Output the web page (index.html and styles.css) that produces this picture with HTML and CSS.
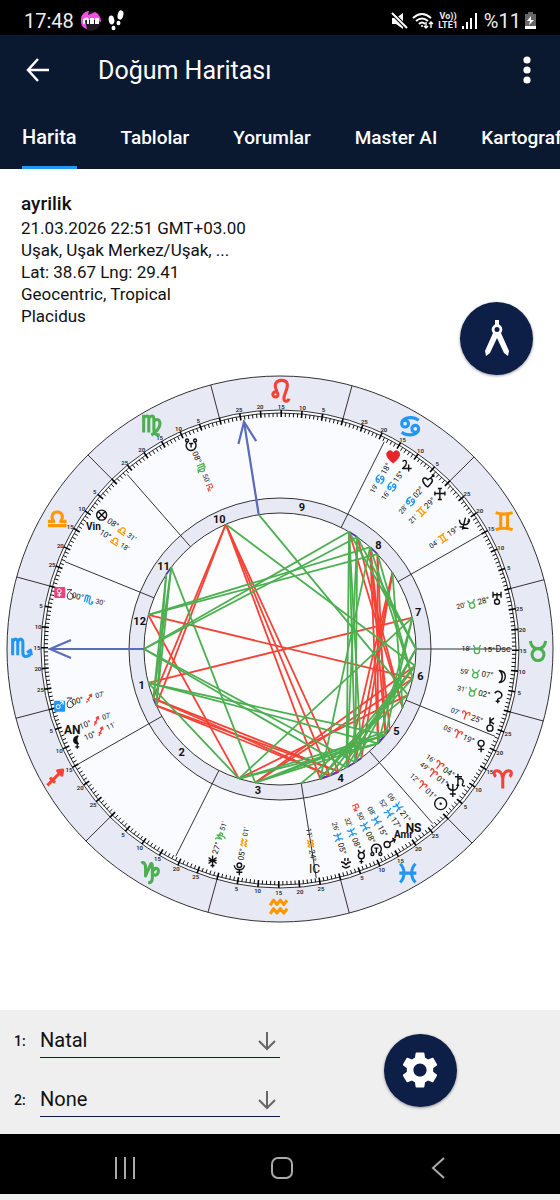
FILE: index.html
```html
<!DOCTYPE html>
<html lang="tr">
<head>
    <meta charset="UTF-8">
    <meta name="viewport" content="width=device-width, initial-scale=1.0">
    <title>Doğum Haritası</title>
    <link rel="stylesheet" href="styles.css">
</head>
<body>
    <div class="status-bar">
        <span>17:48</span>
        <svg class="app-badge" width="20" height="20" viewBox="0 0 20 20">
            <circle cx="10" cy="10" r="10" fill="#1d1a20"/>
            <path d="M0 11C-1 4 4 0 8 0L7 4L12 2L14 1C18 3 20 7 20 11L15 9H4L6 18C2 17 0 14 0 11Z" fill="#f04fe0"/>
            <path d="M3 13V8M3 9Q6 6 7 9V13M10 13V8H12V13M15 13V8H17V13" fill="none" stroke="#fff" stroke-width="2"/>
        </svg>
        <svg width="17" height="21" viewBox="0 0 17 21" fill="#fff">
            <ellipse cx="3.500" cy="10" rx="2.800" ry="4.500" transform="rotate(-10 3.500 10)"/>
            <ellipse cx="5.500" cy="18" rx="2" ry="2.300"/>
            <ellipse cx="12.500" cy="5" rx="2.800" ry="4.700" transform="rotate(14 12.500 5)"/>
            <ellipse cx="10.500" cy="13" rx="2" ry="2.300"/>
        </svg>
        <div class="status-right">
            <svg width="17" height="18" viewBox="0 0 17 18" fill="#fff">
                <path d="M1 6H5L12 1V17L5 12H1Z"/>
                <path d="M1 1L16 16" stroke="#000" stroke-width="4"/>
                <path d="M1 1L16 16" stroke="#fff" stroke-width="2"/>
            </svg>
            <svg width="22" height="18" viewBox="0 0 22 18" fill="none" stroke="#fff" stroke-width="2">
                <path d="M1 6Q10-2 19 6M4 9Q10 4 16 9M7 12Q10 9 13 12"/>
                <circle cx="10" cy="14" r="1" fill="#fff" stroke="none"/>
                <path d="M14 10V16M12 14L14 16L16 14M19 16V10M17 12L19 10L21 12" stroke-width="1.400"/>
            </svg>
            <span class="volte"><span>Vo))</span><span>LTE1</span></span>
            <svg width="15" height="16" viewBox="0 0 15 16" stroke="#fff" stroke-width="2">
                <path d="M1 16V13M5 16V9M9 16V5M14 16V0"/>
            </svg>
            <span class="percent">%11</span>
            <svg width="11" height="17" viewBox="0 0 11 17">
                <path d="M3 0H8V2H11V17H0V2H3Z" fill="#666"/>
                <path d="M0 14H11V17H0Z" fill="#fff"/>
                <path d="M6 4L2 9H5L4 13L9 8H6Z" fill="#fff"/>
            </svg>
        </div>
    </div>

    <header class="app-bar">
        <div class="title-row">
            <button type="button" class="icon-button" aria-label="Geri">
                <svg width="24" height="24" viewBox="0 0 24 24" fill="none" stroke="#fff" stroke-width="2.500">
                    <path d="M23 12H2M12 1L2 12L12 23"/>
                </svg>
            </button>
            <h1>Doğum Haritası</h1>
            <button type="button" class="icon-button" aria-label="Menü">
                <svg width="8" height="28" viewBox="0 0 8 28" fill="#fff">
                    <circle cx="4" cy="4" r="3.600"/>
                    <circle cx="4" cy="14" r="3.600"/>
                    <circle cx="4" cy="24" r="3.600"/>
                </svg>
            </button>
        </div>
        <nav class="tabs">
            <button type="button" class="tab active">Harita</button>
            <button type="button" class="tab">Tablolar</button>
            <button type="button" class="tab">Yorumlar</button>
            <button type="button" class="tab">Master AI</button>
            <button type="button" class="tab">Kartograf</button>
        </nav>
    </header>

    <main class="content">
        <section class="info">
            <h2>ayrilik</h2>
            <p>21.03.2026 22:51 GMT+03.00</p>
            <p>Uşak, Uşak Merkez/Uşak, ...</p>
            <p>Lat: 38.67 Lng: 29.41</p>
            <p>Geocentric, Tropical</p>
            <p>Placidus</p>
        </section>
        <button type="button" class="fab fab-compass" aria-label="Pergel">
            <svg width="28" height="40" viewBox="0 0 28 40" fill="#fff">
                <path d="M12 1H16V6H12Z"/>
                <path fill-rule="evenodd" d="M14 5A5.500 5.500 0 0 1 18 14L26 32L25 37L21 34L14 19L7 34L3 37L2 32L10 14A5.500 5.500 0 0 1 14 5ZM14 8A2.500 2.500 0 1 0 14 13A2.500 2.500 0 1 0 14 8Z"/>
            </svg>
        </button>
        <svg id="chart" class="chart" viewBox="-280 -280 560 560"></svg>
    </main>

    <section class="panel">
        <div class="fields">
            <div class="field">
                <label for="chart-one">1:</label>
                <div class="select-box">
                    <select id="chart-one"><option>Natal</option><option>None</option></select>
                    <svg width="18" height="20" viewBox="0 0 18 20" fill="none" stroke="#666" stroke-width="2"><path d="M9 1V18M1 10L9 18L17 10"/></svg>
                </div>
            </div>
            <div class="field">
                <label for="chart-two">2:</label>
                <div class="select-box">
                    <select id="chart-two"><option>None</option><option>Natal</option></select>
                    <svg width="18" height="20" viewBox="0 0 18 20" fill="none" stroke="#666" stroke-width="2"><path d="M9 1V18M1 10L9 18L17 10"/></svg>
                </div>
            </div>
        </div>
        <div class="panel-action">
            <button type="button" class="fab" aria-label="Ayarlar">
                <svg width="44" height="46" viewBox="0 0 24 24" fill="#fff">
                    <path d="M19.140 12.940c.040-.300.060-.610.060-.940 0-.320-.020-.640-.070-.940l2.030-1.580c.180-.140.230-.410.120-.610l-1.920-3.320c-.120-.220-.370-.290-.590-.220l-2.390.960c-.500-.380-1.030-.700-1.620-.940l-.360-2.540c-.040-.240-.240-.410-.480-.410h-3.840c-.240 0-.430.170-.470.410l-.360 2.540c-.590.240-1.130.570-1.620.940l-2.390-.960c-.220-.080-.470 0-.590.220L2.740 8.870c-.120.210-.080.470.120.610l2.030 1.580c-.050.300-.090.630-.090.940s.020.640.070.940l-2.030 1.580c-.180.140-.230.410-.120.610l1.920 3.320c.120.220.370.290.590.220l2.390-.960c.500.380 1.030.700 1.620.940l.360 2.540c.050.240.240.410.480.410h3.840c.240 0 .440-.170.470-.410l.360-2.540c.590-.240 1.130-.560 1.620-.940l2.390.960c.220.080.470 0 .590-.220l1.920-3.320c.120-.220.070-.470-.120-.610l-2.010-1.580zM12 15.600c-1.980 0-3.600-1.620-3.600-3.600s1.620-3.600 3.600-3.600 3.600 1.620 3.600 3.600-1.620 3.600-3.600 3.600z"/>
                </svg>
            </button>
        </div>
    </section>

    <nav class="system-nav">
        <button type="button" aria-label="Son uygulamalar">
            <svg width="22" height="22" viewBox="0 0 22 22" stroke="#aaa" stroke-width="2"><path d="M2 0V22M11 0V22M20 0V22"/></svg>
        </button>
        <button type="button" aria-label="Ana ekran">
            <svg width="22" height="22" viewBox="0 0 22 22" fill="none" stroke="#aaa" stroke-width="2"><rect x="1" y="1" width="20" height="20" rx="6"/></svg>
        </button>
        <button type="button" aria-label="Geri">
            <svg width="22" height="22" viewBox="0 0 22 22" fill="none" stroke="#aaa" stroke-width="2"><path d="M16 1L5 11L16 21"/></svg>
        </button>
    </nav>
    <script src="chart.js"></script>
</body>
</html>
```
FILE: styles.css
```css
* {
    box-sizing: border-box;
}
body {
    font-family: Roboto, "Noto Sans", sans-serif;
    background-color: #efefef;
    color: #111111;
    margin: 0;
    padding-bottom: 6px;
    display: flex;
    flex-direction: column;
    min-height: 100vh;
}
button {
    background: none;
    border: none;
    padding: 0;
    font-family: inherit;
    cursor: pointer;
}
svg {
    display: block;
    flex: none;
}
h1, h2, p {
    margin: 0;
}
.status-bar {
    background-color: #000000;
    color: #eeeeee;
    height: 35px;
    padding: 6px 24px 0;
    display: flex;
    align-items: center;
    gap: 7px;
    font-size: 20px;
}
.status-right {
    margin-left: auto;
    display: flex;
    align-items: center;
    gap: 4px;
}
.volte {
    display: flex;
    flex-direction: column;
    align-items: center;
    font-size: 9px;
    line-height: 9px;
    font-weight: 700;
}
.percent {
    margin-left: 3px;
}
.app-bar {
    background-color: #0a1830;
    color: #ffffff;
}
.title-row {
    height: 70px;
    padding: 0 29px 0 26px;
    display: flex;
    align-items: center;
}
.title-row h1 {
    flex: 1;
    margin-left: 48px;
    font-size: 25px;
    font-weight: 400;
}
.tabs {
    display: flex;
    gap: 44px;
    height: 64px;
    padding-left: 22px;
    overflow: hidden;
}
.tab {
    flex: none;
    color: #ffffff;
    font-size: 19px;
    font-weight: 500;
    border-top: 3px solid transparent;
    border-bottom: 3px solid transparent;
}
.tab.active {
    font-size: 20px;
    border-bottom-color: #2196f3;
}
.content {
    position: relative;
    flex: 1;
    background-color: #ffffff;
    padding-top: 24px;
}
.info {
    padding: 0 21px;
    margin-bottom: 42px;
    font-size: 17px;
    line-height: 22px;
}
.info h2 {
    font-size: 19px;
    font-weight: 500;
    margin-bottom: 2px;
}
.fab {
    width: 73px;
    height: 73px;
    border-radius: 50%;
    background-color: #0d1f47;
    box-shadow: 0 1px 3px rgba(0, 0, 0, 0.4);
    display: flex;
    align-items: center;
    justify-content: center;
}
.fab-compass {
    position: absolute;
    top: 133px;
    right: 27px;
}
.chart {
    width: 100%;
    max-width: 640px;
    margin: 0 auto;
}
.chart text {
    text-anchor: middle;
    dominant-baseline: central;
    fill: #111111;
}
.chart .scale {
    font-size: 6px;
    font-weight: 500;
}
.chart .house {
    font-size: 11px;
    font-weight: 700;
}
.chart .degree {
    font-size: 8px;
}
.chart .minute {
    font-size: 7px;
}
.chart .point {
    font-size: 12px;
    font-weight: 700;
}
.chart .point-small {
    font-size: 10px;
    font-weight: 700;
}
.chart .point-light {
    font-size: 12px;
}
.chart .point-narrow {
    font-size: 9px;
}
.panel {
    background-color: #efefef;
    display: flex;
    padding: 13px 0 17px;
}
.fields {
    width: 50%;
    display: flex;
    flex-direction: column;
    gap: 24px;
    padding-left: 14px;
}
.field {
    display: flex;
    align-items: center;
}
.field label {
    width: 26px;
    font-size: 14px;
    font-weight: 500;
}
.select-box {
    position: relative;
    flex: 1;
}
.select-box svg {
    position: absolute;
    top: 8px;
    right: 4px;
    pointer-events: none;
}
select {
    display: block;
    width: 100%;
    height: 35px;
    padding: 0;
    appearance: none;
    background: none;
    border: none;
    border-bottom: 1px solid #0d1f47;
    border-radius: 0;
    color: #111111;
    font-family: inherit;
    font-size: 20px;
}
.panel-action {
    width: 50%;
    display: flex;
    align-items: center;
    justify-content: center;
}
.system-nav {
    height: 60px;
    background-color: #000000;
    padding: 8px 42px 0 46px;
    display: flex;
    justify-content: space-around;
    align-items: center;
}
```
FILE: chart.js
```js
const ASC = 225.3;
const OUTER = 273;
const SCALE_OUT = 239;
const SCALE_MID = 236;
const SCALE_IN = 232;
const HOUSE_OUT = 151;
const HOUSE_IN = 136;

const RED = '#f44336';
const GREEN = '#4caf50';
const ORANGE = '#ff9800';
const BLUE = '#2196f3';

const circlePath = (x, y, r) => `M${x - r} ${y}a${r} ${r} 0 1 0 ${2 * r} 0a${r} ${r} 0 1 0 ${-2 * r} 0`;

// drawn in a box from -12 to 12
const signs = [
    { color: RED, d: 'M0 11V-1C-1-8-4-10-7-10C-11-10-11-5-8-3M0-1C1-8 4-10 7-10C11-10 11-5 8-3' },
    { color: GREEN, d: 'M-9-11C-8-4-5-2 0-2C5-2 8-4 9-11' + circlePath(0, 5, 7) },
    { color: ORANGE, d: 'M-10-10C-4-8 4-8 10-10M-10 10C-4 8 4 8 10 10M-4-8V8M4-8V8' },
    { color: BLUE, d: 'M-10-5C-6-12 5-11 10-7M10 5C6 12-5 11-10 7' + circlePath(-6, -3, 4) + circlePath(6, 3, 4) },
    { color: RED, d: 'M-5 1C-6-2-8-4-7-8C-5-14 6-14 7-8C8-2 3 3 3 9C3 13 8 13 9 9' + circlePath(-7, 4, 3) },
    { color: GREEN, d: 'M-10-12V9M-10-8C-7-12-4-11-4-7V9M-4-8C-1-12 2-11 2-7V6C2 10 5 12 9 12M2-4C6-9 10-5 9 0C8 5 4 9-1 12' },
    { color: ORANGE, d: 'M-11 8H11M-11 3H-4C-8-2-6-8 0-8C6-8 8-2 4 3H11' },
    { color: BLUE, d: 'M-11-11V9M-11-7C-8-12-5-10-5-6V9M-5-7C-2-12 1-10 1-6V6C1 11 5 12 10 8M6 6L10 3L11 9' },
    { color: RED, d: 'M-10 10L7-7M2-7L8-8L7-2ZM-7 1L-1 7' },
    { color: GREEN, d: 'M-10-10C-7-12-5-9-5-5V5L1-9C3-11 3-7 3-3V7C3 11 1 13-2 13M3 1C5-6 11-5 10 0C9 5 5 5 3 2' },
    { color: ORANGE, d: 'M-10-2L-6-8L-2-3L2-8L6-3L10-8M-10 8L-6 2L-2 7L2 2L6 7L10 2' },
    { color: BLUE, d: 'M-9-11C-3-5-3 5-9 11M9-11C3-5 3 5 9 11M-10 0H10' }
];

const glyphs = {
    jupiter: 'M-4-4C-1-7 1-3-1 0L-4 3H5M2-1V6',
    eros: 'M0 5C-6 1-6-4-3-4C-1-4 0-2 0-2C0-2 2-5 4-3C6-1 3 2 0 5M3-4L6-7M4-7H6V-5',
    cross: 'M-5 0H5M0-5V6M-5-2V2M5-2V2M-2-5H2M-2 6H2',
    psyche: 'M-5-4C-5 2 3 3 5-3M1-6L-2 6M-5 3L4 5M4-5L5-3L3-2',
    uranus: 'M-4-6V0M4-6V0M-4-3H4M0-5V2' + circlePath(0, 4, 2.5),
    moon: 'M-2-6C6-5 6 5-2 6C2 3 2-3-2-6Z',
    ceres: 'M-3-4C0-8 5-5 4-1C3 2 0 1 0 2V6M-2 4H2',
    chiron: 'M0 1V-7M0-3L4-6M0-3L4 0' + circlePath(0, 4, 3),
    venus: 'M0 1V7M-3 4H3' + circlePath(0, -2, 3),
    saturn: 'M-2-7V3M-5-4H2M-2-1C1-4 4-1 3 2C2 4 2 6 5 5',
    neptune: 'M-5-5C-5 2 5 2 5-5M0-6V7M-3 4H3M-6-4L-5-6L-4-4M4-4L5-6L6-4',
    sun: circlePath(0, 0, 6) + circlePath(0, 0, 0.5),
    mars: 'M1-1L6-4M3-5L6-4L5-1' + circlePath(-2, 1, 3),
    node: 'M-3 3C-7-1-4-6 0-6C4-6 7-1 3 3M-2-2H2M0-2V3' + circlePath(-4, 4, 1.5) + circlePath(4, 4, 1.5),
    southNode: 'M-3-3C-7 1-4 6 0 6C4 6 7 1 3-3M-2-1H2M0-1V3' + circlePath(-4, -4, 1.5) + circlePath(4, -4, 1.5),
    mercury: 'M-3-7C-3-3 3-3 3-7M0 2V7M-2 5H2' + circlePath(0, -1, 3),
    vesta: 'M-5 0C-2 0-1 1 0 3C1 1 2 0 5 0M-4 4L0 6L4 4M-1-4V-1M2-4V-1',
    pluto: 'M-5-3C-5 3 5 3 5-3M0 1V7M-3 4H3' + circlePath(0, -3, 2.3),
    pallas: 'M0-6V6M-4-4L4 2M4-4L-4 2M-4-1H4M-2 4H2',
    lilith: 'M1-6C-5-5-5 2 1 2C-1 0-1-4 1-6M0 2V7M-2 5H2',
    fortune: circlePath(0, 0, 5) + 'M-4-4L4 4M4-4L-4 4',
    ring: 'M-3-5L2-5M2-5C-1-3-4 0-2 4C1 6 5 3 3 0L0-2'
};

// lon: ecliptic longitude, at: where the label sits on the wheel
const points = [
    { glyph: 'heart', lon: 108.3, at: 59.5, deg: '18°', min: "19'" },
    { glyph: 'jupiter', lon: 105.3, at: 55.4, deg: '15°', min: "16'" },
    { glyph: 'eros', lon: 92.5, at: 48.5, deg: '02°', min: "28'" },
    { glyph: 'cross', lon: 89.4, at: 44.2, deg: '29°', min: "21'" },
    { glyph: 'psyche', lon: 79.1, at: 34.2, deg: '19°', min: "04'" },
    { glyph: 'uranus', lon: 58.3, at: 13.3, deg: '28°', min: "20'" },
    { text: 'Dsc', style: 'point-narrow', lon: 45.3, at: 0, deg: '15°', min: "18'" },
    { glyph: 'moon', lon: 38, at: -7.1, deg: '07°', min: "59'" },
    { glyph: 'ceres', lon: 32.5, at: -12.5, deg: '02°', min: "31'" },
    { glyph: 'chiron', lon: 25.1, at: -19.7, deg: '25°', min: "07'" },
    { glyph: 'venus', lon: 19.1, at: -25.6, deg: '19°', min: "05'" },
    { glyph: 'saturn', lon: 4.3, at: -36.2, deg: '04°', min: "16'" },
    { glyph: 'neptune', lon: 1.8, at: -39.2, deg: '01°', min: "49'" },
    { glyph: 'sun', lon: 1.2, at: -43.9, deg: '01°', min: "12'" },
    { text: 'NS', style: 'point', lon: 351.1, at: -53.2, deg: '21°', min: "06'" },
    { text: 'Amr', style: 'point-small', lon: 347.9, at: -56.4, deg: '17°', min: "52'" },
    { glyph: 'mars', lon: 345.1, at: -60.7, deg: '15°', min: "08'" },
    { glyph: 'node', lon: 338.8, at: -64.4, deg: '08°', min: "50'", retro: true },
    { glyph: 'mercury', lon: 338.5, at: -68.6, deg: '08°', min: "32'" },
    { glyph: 'vesta', lon: 335.4, at: -72.8, deg: '05°', min: "26'" },
    { text: 'IC', style: 'point-light', lon: 324.2, at: -81.1, deg: '24°', min: "11'" },
    { glyph: 'pluto', lon: 305, at: 259.5, deg: '05°', min: "01'" },
    { glyph: 'pallas', lon: 297.9, at: 252.4, deg: '27°', min: "51'" },
    { glyph: 'lilith', lon: 250.2, at: 204.6, deg: '10°', min: "11'" },
    { text: 'AN', style: 'point', lon: 250.1, at: 201.3, deg: '10°', min: "07'" },
    { glyph: 'ring', box: BLUE, lon: 240.1, at: 194.4, deg: '00°', min: "07'" },
    { glyph: 'ring', box: '#ec407a', lon: 210.5, at: 165.5, deg: '00°', min: "30'" },
    { text: 'Vin', style: 'point-small', lon: 190.3, at: 146.8, deg: '10°', min: "18'" },
    { glyph: 'fortune', lon: 188.5, at: 143.1, deg: '08°', min: "31'" },
    { glyph: 'southNode', lon: 158.8, at: 113.5, deg: '08°', min: "50'", retro: true }
];

const cusps = [180, 209.7, 243.3, 279, 311.2, 337.9, 360, 389.7, 423.3, 459, 491.2, 517.9, 540];

const out = [];

function polar(angle, r) {
    const a = angle * Math.PI / 180;
    return [(r * Math.cos(a)).toFixed(2), (-r * Math.sin(a)).toFixed(2)];
}

function toAngle(lon) {
    return 180 + lon - ASC;
}

function ring(r, fill) {
    out.push(`<circle r="${r}" fill="${fill}" stroke="#333" stroke-width="1"/>`);
}

function line(from, to, color, width) {
    out.push(`<line x1="${from[0]}" y1="${from[1]}" x2="${to[0]}" y2="${to[1]}" stroke="${color}" stroke-width="${width}"/>`);
}

function label(pos, text, style, rotation = 0) {
    out.push(`<text class="${style}" transform="translate(${pos}) rotate(${rotation})">${text}</text>`);
}

function shape(pos, d, color, width, scale = 1, rotation = 0, fill = 'none') {
    out.push(`<path transform="translate(${pos}) rotate(${rotation}) scale(${scale})" d="${d}" fill="${fill}" stroke="${color}" stroke-width="${width}" stroke-linejoin="round"/>`);
}

function arrow(angle) {
    line(polar(angle, HOUSE_IN), polar(angle, 230), '#5c6bc0', 2.2);
    shape(polar(angle, 230), 'M-21-9L0 0L-21 9', '#5c6bc0', 2.2, 1, -angle);
}

function drawRings() {
    ring(OUTER, '#e7e9f5');
    ring(SCALE_OUT, '#fafbfe');
    ring(SCALE_MID, '#fafbfe');
    ring(HOUSE_OUT, '#e7e9f5');
    ring(HOUSE_IN, '#fdfdfe');
}

function drawScale() {
    for (let lon = 0; lon < 360; lon++) {
        const angle = toAngle(lon);
        if (lon % 5) {
            line(polar(angle, SCALE_MID), polar(angle, SCALE_IN), '#111', 1);
            continue;
        }
        line(polar(angle, SCALE_OUT), polar(angle, SCALE_IN), '#000', 1.6);
        if (lon % 30) {
            label(polar(angle, 243), lon % 30, 'scale');
        } else {
            line(polar(angle, SCALE_OUT), polar(angle, OUTER), '#333', 1);
        }
    }
    signs.forEach((sign, i) => {
        shape(polar(toAngle(i * 30 + 15), 258), sign.d, sign.color, 3.6, 0.85);
    });
}

function drawHouses() {
    for (let i = 0; i < 12; i++) {
        line(polar(cusps[i], HOUSE_IN), polar(cusps[i], SCALE_IN), '#333', 1);
        label(polar((cusps[i] + cusps[i + 1]) / 2, 143), i + 1, 'house');
    }
}

function aspectColor(distance) {
    const near = target => Math.abs(distance - target) <= 4;
    if (near(0)) return '#5e35b1';
    if (near(60) || near(120)) return GREEN;
    if (near(90) || near(180)) return RED;
    return null;
}

function drawAspects() {
    const all = points.concat([{ lon: ASC, at: 180 }, { lon: 144.2, at: 99 }]);
    // the axes are opposite by definition
    const axes = [ASC, 45.3, 144.2, 324.2];
    const found = [];
    all.forEach((a, i) => all.slice(i + 1).forEach(b => {
        if (axes.includes(a.lon) && axes.includes(b.lon)) return;
        let distance = Math.abs(a.lon - b.lon);
        if (distance > 180) distance = 360 - distance;
        const color = aspectColor(distance);
        if (color) found.push([a, b, color]);
    }));
    ['#5e35b1', RED, GREEN].forEach(color => {
        found.filter(f => f[2] === color).forEach(([a, b]) => {
            line(polar(a.at, HOUSE_IN), polar(b.at, HOUSE_IN), color, 1.8);
        });
    });
}

function drawPoint(p) {
    const right = Math.cos(p.at * Math.PI / 180) > 0;
    const rotation = right ? -p.at : 180 - p.at;
    const sign = signs[Math.floor(p.lon / 30)];
    const pos = polar(p.at, 223);

    label(polar(p.at, 209), p.deg, 'degree', rotation);
    shape(polar(p.at, 197), sign.d, sign.color, 3.4, 0.38, rotation);
    label(polar(p.at, 186), p.min, 'minute', rotation);
    if (p.retro) {
        shape(polar(p.at, 176), 'M-3 3V-3H0Q2-2 0 0H-3M-1 0L3 3M0 3L3 0', RED, 1, 1, rotation);
    }

    if (p.text) {
        label(pos, p.text, p.style);
    } else if (p.box) {
        out.push(`<rect x="-5" y="-5" width="11" height="11" rx="1" fill="${p.box}" transform="translate(${polar(p.at, 228)})"/>`);
        const mark = p.box === BLUE ? 'M1-1L4-4M1-4H4V-1' + circlePath(-1, 1, 2) : 'M0 1V5M-2 3H2' + circlePath(0, -1, 2);
        shape(polar(p.at, 228), mark, '#fff', 1);
        shape(polar(p.at, 217), glyphs.ring, '#333', 1);
    } else if (p.glyph === 'heart') {
        shape(pos, 'M0 6C-9 0-7-6-3-6C-1-6 0-4 0-4C0-4 1-6 3-6C7-6 9 0 0 6Z', '#e5252a', 1, 1, 0, '#e5252a');
    } else {
        shape(pos, glyphs[p.glyph], '#111', 1.4, 1, 0, p.glyph === 'lilith' ? '#111' : 'none');
    }
}

drawRings();
drawScale();
drawHouses();
drawAspects();
arrow(180);
arrow(99);
points.forEach(drawPoint);
document.getElementById('chart').innerHTML = out.join('');
```
